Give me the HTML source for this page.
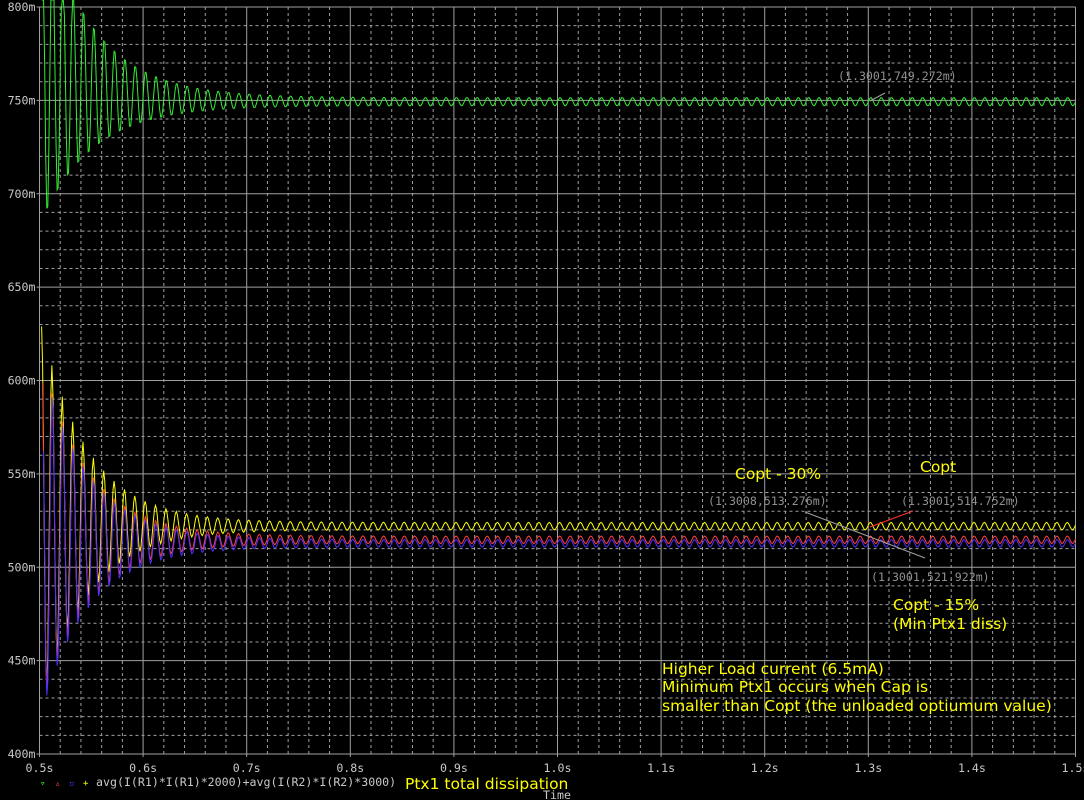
<!DOCTYPE html>
<html><head><meta charset="utf-8"><style>
html,body{margin:0;padding:0;background:#000;width:1084px;height:800px;overflow:hidden}
svg{display:block}
.ax{font-family:"DejaVu Sans Mono","Liberation Mono",monospace;font-size:11.6px;fill:#c8c8c8}
.an{font-family:"DejaVu Sans","Liberation Sans",sans-serif;font-size:15.5px;fill:#ffff00}
.cu{font-family:"DejaVu Sans Mono","Liberation Mono",monospace;font-size:11.6px;fill:#909090}
</style></head><body>
<svg id="s" width="1084" height="800" xmlns="http://www.w3.org/2000/svg">
<g id="grid"></g>
<g id="waves"></g>
<g id="labels"></g>
<line x1="805" y1="512" x2="925" y2="558" stroke="#a0a0a0" stroke-width="1"/>
<line x1="870" y1="527" x2="913" y2="511" stroke="#ff3030" stroke-width="1"/>
<line x1="870" y1="101" x2="885" y2="93" stroke="#a0a0a0" stroke-width="1"/>
<text class="cu" x="838" y="80">(1.3001,749.272m)</text>
<text class="cu" x="708" y="505">(1.3008,513.276m)</text>
<text class="cu" x="901" y="505">(1.3001,514.752m)</text>
<text class="cu" x="871" y="581">(1.3001,521.922m)</text>
<text class="an" x="735" y="479">Copt - 30%</text>
<text class="an" x="920" y="472">Copt</text>
<text class="an" x="893" y="610">Copt - 15%</text>
<text class="an" x="893" y="629">(Min Ptx1 diss)</text>
<text class="an" x="662" y="674">Higher Load current (6.5mA)</text>
<text class="an" x="662" y="692">Minimum Ptx1 occurs when Cap is</text>
<text class="an" x="662" y="711">smaller than Copt (the unloaded optiumum value)</text>
<text x="40" y="786" font-family="DejaVu Sans Mono,monospace" font-size="9" fill="#22ff22">▿</text>
<text x="55" y="786" font-family="DejaVu Sans Mono,monospace" font-size="9" fill="#ff4040">▵</text>
<text x="69" y="786" font-family="DejaVu Sans Mono,monospace" font-size="9" fill="#4040ff">▫</text>
<text x="83" y="786" font-family="DejaVu Sans Mono,monospace" font-size="9" fill="#ffff00">+</text>
<text class="ax" x="96" y="786">avg(I(R1)*I(R1)*2000)+avg(I(R2)*I(R2)*3000)</text>
<text class="an" x="405" y="789">Ptx1 total dissipation</text>
<text class="ax" x="543" y="799" font-size="10">Time</text>
</svg>
<script>
const X0=39.5,DX=103.6,Y0=754,YT=7;
const sx=t=>X0+(t-0.5)*DX*10, sy=v=>Y0-(v-400)*(Y0-YT)/400;
let g='',l='';
for(let i=0;i<=50;i++){const x=X0+i*DX/5;if(i%5)g+=`<line x1="${x}" y1="${YT}" x2="${x}" y2="${Y0}" stroke="#a0a0a0" stroke-dasharray="3,3"/>`;}
for(let i=0;i<=40;i++){const y=Y0-i*(Y0-YT)/40;if(i%5)g+=`<line x1="${X0}" y1="${y}" x2="${X0+10*DX}" y2="${y}" stroke="#a0a0a0" stroke-dasharray="3,3"/>`;}
for(let i=0;i<=10;i++){const x=X0+i*DX;g+=`<line x1="${x}" y1="${YT}" x2="${x}" y2="${Y0+3}" stroke="#a0a0a0"/>`;
 const t=(0.5+i*0.1).toFixed(1);l+=`<text class="ax" x="${x}" y="${Y0+18}" text-anchor="middle">${t}s</text>`;}
for(let i=0;i<=8;i++){const y=Y0-i*(Y0-YT)/8;g+=`<line x1="${X0-3}" y1="${y}" x2="${X0+10*DX}" y2="${y}" stroke="#a0a0a0"/>`;
 l+=`<text class="ax" x="${X0-4}" y="${y+4}" text-anchor="end">${400+i*50}m</text>`;}
document.getElementById('grid').innerHTML=g;
document.getElementById('labels').innerHTML=l;
function wave(fin,off,A,tau,col,t0,ph,r){
 let p='';
 for(let t=t0;t<=1.5;t+=0.001){
  const d=t-t0,e=Math.exp(-d/tau);
  const v=fin+off*e+(r+A*e)*Math.sin(2*Math.PI*(t/0.01)+ph);
  let y=sy(v);y=Math.max(0,Math.min(800,y));
  p+=(p?'L':'M')+sx(t).toFixed(1)+' '+y.toFixed(1);
 }
 return `<path d="${p}" fill="none" stroke="${col}" stroke-width="1"/>`;
}
let w='';
w+=wave(749.3,20,85,0.05,'#33ee33',0.502,0,2.2);
w+=wave(522,5,100,0.045,'#ffff00',0.502,0.3,2);
w+=wave(514.7,4,90,0.045,'#ff4040',0.503,0.2,2);
w+=wave(512.8,3,90,0.045,'#5030ff',0.504,0.1,2);
document.getElementById('waves').innerHTML=w;
</script>
</body></html>
